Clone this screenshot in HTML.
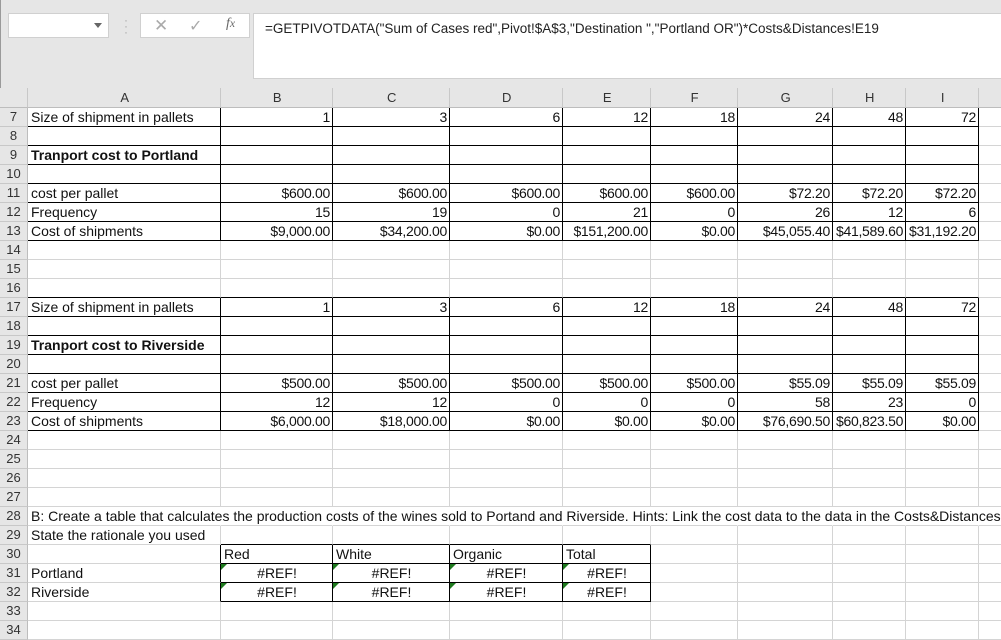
<!DOCTYPE html>
<html><head><meta charset="utf-8"><style>
body{margin:0;width:1001px;height:628px;overflow:hidden;background:#fff;font-family:"Liberation Sans",sans-serif;position:relative}
.tb{position:absolute;left:0;top:0;width:1001px;height:88px;background:#e6e6e6;border-left:1px solid #9a9a9a;box-sizing:border-box}
.nb{position:absolute;left:7px;top:13px;width:101px;height:25px;background:#fff;border:1px solid #d0d0d0;box-sizing:border-box}
.fxb{position:absolute;left:139px;top:13px;width:110px;height:25px;background:#fff;border:1px solid #d0d0d0;box-sizing:border-box;color:#aaa;font-size:15px}
.fb{position:absolute;left:252px;top:13px;width:760px;height:66px;background:#fff;border:1px solid #d0d0d0;box-sizing:border-box;font-size:13.5px;padding:7px 0 0 11px;color:#222}
table{position:absolute;left:0;top:88px;width:1029px;border-collapse:separate;border-spacing:0;table-layout:fixed;font-size:14px;color:#111}
td{height:18px;line-height:18px;padding:0 2px 0 3px;border-right:1px solid #d4d4d4;border-bottom:1px solid #d4d4d4;white-space:nowrap;overflow:visible;box-sizing:content-box;text-align:right;letter-spacing:-0.3px}
td.l{text-align:left;letter-spacing:0}
td.c{text-align:center;letter-spacing:0}
td.h{background:#e6e6e6;color:#333;text-align:center;border-right:1px solid #bdbdbd;border-bottom:1px solid #c8c8c8;padding:0;font-size:13px;letter-spacing:0}
tr.hd td{height:19px;line-height:19px;background:#e6e6e6;text-align:center;border-bottom:1px solid #bdbdbd;border-right:1px solid #c8c8c8;color:#333;font-size:13px}
td.k{border-right-color:#000;border-bottom-color:#000}
td.bb{border-bottom-color:#000}
td.br{border-right-color:#000}
td.n{border-right-color:transparent}
b{font-weight:bold}
.g{position:relative}
.g:before{content:"";position:absolute;left:0;top:0;border-top:6px solid #1e7a1e;border-right:6px solid transparent}
</style></head><body>
<div class="tb">
<div class="nb"><span style="position:absolute;right:6px;top:9px;border-top:5px solid #666;border-left:4px solid transparent;border-right:4px solid transparent"></span></div>
<div style="position:absolute;left:123px;top:17px;color:#aaa;font-size:12px;line-height:6px">·<br>·<br>·</div>
<div class="fxb"><span style="position:absolute;left:13px;top:2px;font-size:17px">✕</span><span style="position:absolute;left:48px;top:2px;font-size:16px">✓</span><span style="position:absolute;left:85px;top:2px;font-style:italic;font-family:'Liberation Serif',serif;color:#666;font-size:14px">f<small>x</small></span></div>
<div class="fb">=GETPIVOTDATA("Sum of Cases red",Pivot!$A$3,"Destination ","Portland OR")*Costs&amp;Distances!E19</div>
</div>
<table>
<colgroup><col style="width:28px"><col style="width:193px"><col style="width:112px"><col style="width:117px"><col style="width:113px"><col style="width:88px"><col style="width:87px"><col style="width:95px"><col style="width:73px"><col style="width:73px"><col style="width:50px"></colgroup>
<tr class="hd"><td></td><td>A</td><td>B</td><td>C</td><td>D</td><td>E</td><td>F</td><td>G</td><td>H</td><td>I</td><td style="text-align:left;padding-left:30px">J</td></tr>
<tr><td class="h">7</td><td class="l k">Size of shipment in pallets</td><td class="k">1</td><td class="k">3</td><td class="k">6</td><td class="k">12</td><td class="k">18</td><td class="k">24</td><td class="k">48</td><td class="k">72</td><td></td></tr>
<tr><td class="h">8</td><td class="k"></td><td class="k"></td><td class="k"></td><td class="k"></td><td class="k"></td><td class="k"></td><td class="k"></td><td class="k"></td><td class="k"></td><td></td></tr>
<tr><td class="h">9</td><td class="l k"><b>Tranport cost to Portland</b></td><td class="k"></td><td class="k"></td><td class="k"></td><td class="k"></td><td class="k"></td><td class="k"></td><td class="k"></td><td class="k"></td><td></td></tr>
<tr><td class="h">10</td><td class="k"></td><td class="k"></td><td class="k"></td><td class="k"></td><td class="k"></td><td class="k"></td><td class="k"></td><td class="k"></td><td class="k"></td><td></td></tr>
<tr><td class="h">11</td><td class="l k">cost per pallet</td><td class="k">$600.00</td><td class="k">$600.00</td><td class="k">$600.00</td><td class="k">$600.00</td><td class="k">$600.00</td><td class="k">$72.20</td><td class="k">$72.20</td><td class="k">$72.20</td><td></td></tr>
<tr><td class="h">12</td><td class="l k">Frequency</td><td class="k">15</td><td class="k">19</td><td class="k">0</td><td class="k">21</td><td class="k">0</td><td class="k">26</td><td class="k">12</td><td class="k">6</td><td></td></tr>
<tr><td class="h">13</td><td class="l k">Cost of shipments</td><td class="k">$9,000.00</td><td class="k">$34,200.00</td><td class="k">$0.00</td><td class="k">$151,200.00</td><td class="k">$0.00</td><td class="k">$45,055.40</td><td class="k">$41,589.60</td><td class="k">$31,192.20</td><td></td></tr>
<tr><td class="h">14</td><td></td><td></td><td></td><td></td><td></td><td></td><td></td><td></td><td></td><td></td></tr>
<tr><td class="h">15</td><td></td><td></td><td></td><td></td><td></td><td></td><td></td><td></td><td></td><td></td></tr>
<tr><td class="h">16</td><td class="bb"></td><td class="bb"></td><td class="bb"></td><td class="bb"></td><td class="bb"></td><td class="bb"></td><td class="bb"></td><td class="bb"></td><td class="bb"></td><td></td></tr>
<tr><td class="h">17</td><td class="l k">Size of shipment in pallets</td><td class="k">1</td><td class="k">3</td><td class="k">6</td><td class="k">12</td><td class="k">18</td><td class="k">24</td><td class="k">48</td><td class="k">72</td><td></td></tr>
<tr><td class="h">18</td><td class="k"></td><td class="k"></td><td class="k"></td><td class="k"></td><td class="k"></td><td class="k"></td><td class="k"></td><td class="k"></td><td class="k"></td><td></td></tr>
<tr><td class="h">19</td><td class="l k"><b>Tranport cost to Riverside</b></td><td class="k"></td><td class="k"></td><td class="k"></td><td class="k"></td><td class="k"></td><td class="k"></td><td class="k"></td><td class="k"></td><td></td></tr>
<tr><td class="h">20</td><td class="k"></td><td class="k"></td><td class="k"></td><td class="k"></td><td class="k"></td><td class="k"></td><td class="k"></td><td class="k"></td><td class="k"></td><td></td></tr>
<tr><td class="h">21</td><td class="l k">cost per pallet</td><td class="k">$500.00</td><td class="k">$500.00</td><td class="k">$500.00</td><td class="k">$500.00</td><td class="k">$500.00</td><td class="k">$55.09</td><td class="k">$55.09</td><td class="k">$55.09</td><td></td></tr>
<tr><td class="h">22</td><td class="l k">Frequency</td><td class="k">12</td><td class="k">12</td><td class="k">0</td><td class="k">0</td><td class="k">0</td><td class="k">58</td><td class="k">23</td><td class="k">0</td><td></td></tr>
<tr><td class="h">23</td><td class="l k">Cost of shipments</td><td class="k">$6,000.00</td><td class="k">$18,000.00</td><td class="k">$0.00</td><td class="k">$0.00</td><td class="k">$0.00</td><td class="k">$76,690.50</td><td class="k">$60,823.50</td><td class="k">$0.00</td><td></td></tr>
<tr><td class="h">24</td><td></td><td></td><td></td><td></td><td></td><td></td><td></td><td></td><td></td><td></td></tr>
<tr><td class="h">25</td><td></td><td></td><td></td><td></td><td></td><td></td><td></td><td></td><td></td><td></td></tr>
<tr><td class="h">26</td><td></td><td></td><td></td><td></td><td></td><td></td><td></td><td></td><td></td><td></td></tr>
<tr><td class="h">27</td><td></td><td></td><td></td><td></td><td></td><td></td><td></td><td></td><td></td><td></td></tr>
<tr><td class="h">28</td><td class="l n">B: Create a table that calculates the production costs of the wines sold to Portand and Riverside. Hints: Link the cost data to the data in the Costs&amp;Distances tab</td><td class="n"></td><td class="n"></td><td class="n"></td><td class="n"></td><td class="n"></td><td class="n"></td><td class="n"></td><td class="n"></td><td></td></tr>
<tr><td class="h">29</td><td class="l">State the rationale you used</td><td class="bb"></td><td class="bb"></td><td class="bb"></td><td class="bb"></td><td></td><td></td><td></td><td></td><td></td></tr>
<tr><td class="h">30</td><td class="br"></td><td class="l k">Red</td><td class="l k">White</td><td class="l k">Organic</td><td class="l k">Total</td><td></td><td></td><td></td><td></td><td></td></tr>
<tr><td class="h">31</td><td class="l br">Portland</td><td class="c k g">#REF!</td><td class="c k g">#REF!</td><td class="c k g">#REF!</td><td class="c k g">#REF!</td><td></td><td></td><td></td><td></td><td></td></tr>
<tr><td class="h">32</td><td class="l br">Riverside</td><td class="c k g">#REF!</td><td class="c k g">#REF!</td><td class="c k g">#REF!</td><td class="c k g">#REF!</td><td></td><td></td><td></td><td></td><td></td></tr>
<tr><td class="h">33</td><td></td><td></td><td></td><td></td><td></td><td></td><td></td><td></td><td></td><td></td></tr>
<tr><td class="h">34</td><td></td><td></td><td></td><td></td><td></td><td></td><td></td><td></td><td></td><td></td></tr>
</table>
</body></html>
